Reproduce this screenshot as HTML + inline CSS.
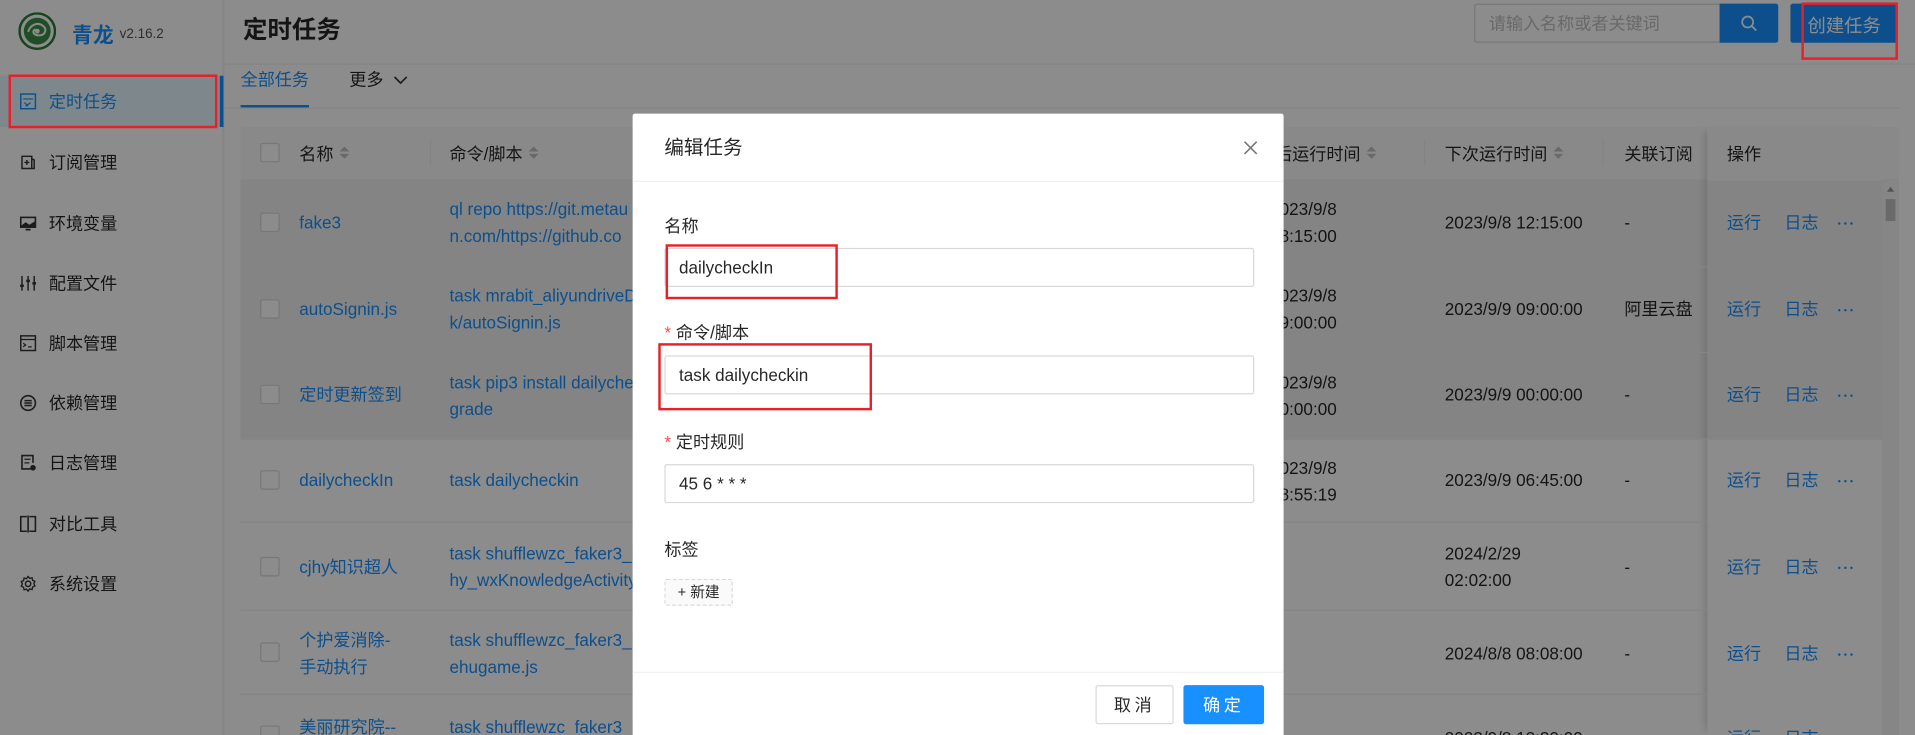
<!DOCTYPE html>
<html><head><meta charset="utf-8">
<style>
*{box-sizing:border-box;margin:0;padding:0}
html,body{width:1915px;height:735px;overflow:hidden;background:#fff}
body{font-family:"Liberation Sans","Noto Sans CJK SC",sans-serif;color:rgba(0,0,0,.85)}
#root{position:absolute;left:0;top:0;width:1568px;height:602px;transform:scale(1.22130);transform-origin:0 0;overflow:hidden;background:#f5f6f8}
.abs{position:absolute}
.side{left:0;top:0;width:183px;height:602px;background:#fff;border-right:1px solid #eee}
.mi{position:absolute;left:0;width:180px;height:40px;line-height:40px;font-size:14px;color:rgba(0,0,0,.85)}
.mi .ic{position:absolute;left:16px;top:13px;width:14px;height:14px}
.mi span.t{position:absolute;left:40px}
.main{left:184px;top:0;width:1384px;height:602px;background:#fff}
.th{position:absolute;top:104px;height:44px;line-height:44px;font-size:14px;color:rgba(0,0,0,.85)}
.sort{display:inline-block;width:8px;height:12px;vertical-align:-1px;margin-left:5px;position:relative}
.sort:before{content:"";position:absolute;left:0;top:0;border:4px solid transparent;border-bottom:4px solid #bfbfbf;border-top:0}
.sort:after{content:"";position:absolute;left:0;top:6px;border:4px solid transparent;border-top:4px solid #bfbfbf;border-bottom:0}
.row{position:absolute;left:197px;width:1201px;border-bottom:1px solid #f0f0f0}
.cb{position:absolute;left:213px;width:16px;height:16px;border:1px solid #d9d9d9;border-radius:2px;background:#fff}
.c{position:absolute;font-size:14px;line-height:22px}
.lk{color:#1890ff}
.dots{position:absolute;left:1505px;width:14px;height:3px}
.dots:before{content:"";position:absolute;left:0;top:0;width:2px;height:2px;background:#1890ff;box-shadow:5px 0 0 #1890ff,10px 0 0 #1890ff;border-radius:1px}
.mask{left:0;top:0;width:1568px;height:602px;background:rgba(0,0,0,.45)}
.modal{left:518px;top:93px;width:533px;height:520px;background:#fff;border-radius:2px}
.lab{position:absolute;left:26px;font-size:14px;color:rgba(0,0,0,.85)}
.lab b{color:#ff4d4f;font-weight:normal;margin-right:4px;font-family:"Liberation Sans",sans-serif}
.inp{position:absolute;left:26px;width:483px;height:32px;border:1px solid #d9d9d9;border-radius:2px;font-size:14px;line-height:30px;padding-left:11px;color:rgba(0,0,0,.85)}
.red{position:absolute;border:2px solid #e8202a}
</style></head><body>
<div id="root">
<div class="abs side">
  <svg class="abs" style="left:15px;top:10px" width="31" height="31" viewBox="0 0 31 31"><circle cx="15.5" cy="15.5" r="14.5" fill="#fff" stroke="#2a7a3a" stroke-width="2"/><circle cx="15.5" cy="15.5" r="11" fill="#3a8f45"/><path d="M8 16c2-6 8-8 12-5s2 8-3 8-6-4-3-5" fill="none" stroke="#fff" stroke-width="1.6"/><circle cx="15.5" cy="15.5" r="2" fill="#fff"/></svg>
  <div class="abs" style="left:59px;top:15px;font-size:17px;font-weight:bold;color:#1890ff">青龙</div>
  <div class="abs" style="left:98px;top:22px;font-size:11px;color:#555">v2.16.2</div>
  <div class="abs" style="left:0;top:62px;width:180px;height:42px;background:#e6f7ff"></div>
  <div class="abs" style="left:180px;top:62px;width:3px;height:42px;background:#1890ff"></div>
  <div class="mi" style="top:63px;color:#1890ff"><svg class="ic" viewBox="0 0 14 14"><rect x="1" y="1" width="12" height="12" fill="none" stroke="#1890ff" stroke-width="1.2"/><path d="M3 5h8M4 8l3 3M9 8l-4 3" stroke="#1890ff" stroke-width="1" fill="none"/></svg><span class="t">定时任务</span></div>
  <div class="mi" style="top:113px"><svg class="ic" viewBox="0 0 14 14"><path d="M2 2h8v10H2zM10 4l2 1v7l-2 0M6 5v4M4 7h4" fill="none" stroke="#333" stroke-width="1.2"/></svg><span class="t">订阅管理</span></div>
  <div class="mi" style="top:163px"><svg class="ic" viewBox="0 0 14 14"><rect x="1" y="2" width="12" height="8" fill="none" stroke="#333" stroke-width="1.3"/><path d="M1 9l4-3 3 2 5-3v5H1z" fill="#333"/><path d="M5 12h4" stroke="#333" stroke-width="1.5"/></svg><span class="t">环境变量</span></div>
  <div class="mi" style="top:212px"><svg class="ic" viewBox="0 0 14 14"><path d="M2 1v12M7 1v12M12 1v12" stroke="#333" stroke-width="1.2"/><rect x="0.5" y="8" width="3" height="2" fill="#333"/><rect x="5.5" y="4" width="3" height="2" fill="#333"/><rect x="10.5" y="6" width="3" height="2" fill="#333"/></svg><span class="t">配置文件</span></div>
  <div class="mi" style="top:261px"><svg class="ic" viewBox="0 0 14 14"><rect x="1" y="1" width="12" height="12" fill="none" stroke="#333" stroke-width="1.2"/><path d="M1 4h12M3 7l2 1.5L3 10M7 10h3" fill="none" stroke="#333" stroke-width="1"/></svg><span class="t">脚本管理</span></div>
  <div class="mi" style="top:310px"><svg class="ic" viewBox="0 0 14 14"><circle cx="7" cy="7" r="6" fill="none" stroke="#333" stroke-width="1.3"/><path d="M4 5h6M4 7h6M4 9h6" stroke="#333" stroke-width="1.2"/></svg><span class="t">依赖管理</span></div>
  <div class="mi" style="top:359px"><svg class="ic" viewBox="0 0 14 14"><path d="M9 12H2V1h9v6" fill="none" stroke="#333" stroke-width="1.3"/><path d="M4 4h5M4 7h4" stroke="#333"/><circle cx="11" cy="11" r="2.3" fill="#333"/></svg><span class="t">日志管理</span></div>
  <div class="mi" style="top:409px"><svg class="ic" viewBox="0 0 14 14"><path d="M6 1H1v12h5M8 1h5v12H8M7 0v14" fill="none" stroke="#333" stroke-width="1.3"/></svg><span class="t">对比工具</span></div>
  <div class="mi" style="top:458px"><svg class="ic" viewBox="0 0 14 14"><circle cx="7" cy="7" r="2.2" fill="none" stroke="#333" stroke-width="1.2"/><path d="M7 1l1.3 1.6 2-.5.4 2 1.9.9-.9 1.9.9 1.9-1.9.9-.4 2-2-.5L7 13l-1.3-1.6-2 .5-.4-2-1.9-.9.9-1.9-.9-1.9 1.9-.9.4-2 2 .5z" fill="none" stroke="#333" stroke-width="1.1"/></svg><span class="t">系统设置</span></div>
</div>
<div class="abs main"></div>
<div class="abs" style="left:199px;top:8px;font-size:20px;font-weight:bold;color:rgba(0,0,0,.85)">定时任务</div>
<div class="abs" style="left:1207px;top:3px;width:202px;height:32px;border:1px solid #d9d9d9;border-radius:2px 0 0 2px;font-size:14px;line-height:30px;padding-left:11px;color:#bfbfbf;background:#fff">请输入名称或者关键词</div>
<div class="abs" style="left:1408px;top:3px;width:48px;height:32px;background:#1890ff;border-radius:0 2px 2px 0"><svg class="abs" style="left:17px;top:9px" width="14" height="14" viewBox="0 0 14 14"><circle cx="6" cy="6" r="4.5" fill="none" stroke="#fff" stroke-width="1.4"/><path d="M9.3 9.3L13 13" stroke="#fff" stroke-width="1.5"/></svg></div>
<div class="abs" style="left:1466px;top:3px;width:88px;height:32px;background:#1890ff;border-radius:2px"><div class="abs" style="left:0;top:10px;width:88px;color:#fff;font-size:15px;line-height:18px;text-align:center">创建任务</div></div>
<div class="abs" style="left:184px;top:52px;width:1384px;height:1px;background:#eee"></div>
<div class="abs" style="left:197px;top:54px;font-size:14px;line-height:22px;color:#1890ff">全部任务</div>
<div class="abs" style="left:197px;top:86px;width:56px;height:2px;background:#1890ff"></div>
<div class="abs" style="left:286px;top:54px;font-size:14px;line-height:22px">更多 <svg width="12" height="8" viewBox="0 0 12 8" style="margin-left:4px"><path d="M1 1l5 5 5-5" fill="none" stroke="#333" stroke-width="1.4"/></svg></div>
<div class="abs" style="left:184px;top:88px;width:1371px;height:1px;background:#eee"></div>
<div class="abs" style="left:197px;top:104px;width:1358px;height:44px;background:#fafafa;border-bottom:1px solid #f0f0f0"></div>
<div class="abs" style="left:197px;top:148px;width:1201px;height:212px;background:#f0f0f0"></div>
<div class="cb" style="top:117px"></div>
<div class="th" style="left:245px">名称<span class="sort"></span></div>
<div class="abs" style="left:352px;top:114px;width:1px;height:22px;background:#eee"></div>
<div class="th" style="left:368px">命令/脚本<span class="sort"></span></div>
<div class="th" style="left:1030px">最后运行时间<span class="sort"></span></div>
<div class="abs" style="left:1166px;top:114px;width:1px;height:22px;background:#eee"></div>
<div class="th" style="left:1183px">下次运行时间<span class="sort"></span></div>
<div class="abs" style="left:1312px;top:114px;width:1px;height:22px;background:#eee"></div>
<div class="th" style="left:1330px">关联订阅</div>
<div class="abs" style="left:1398px;top:104px;width:143px;height:498px;background:#fff;box-shadow:-6px 0 6px -4px rgba(0,0,0,.15)"></div>
<div class="abs" style="left:1398px;top:104px;width:143px;height:44px;background:#fafafa"></div>
<div class="abs" style="left:1398px;top:148px;width:143px;height:212px;background:#f0f0f0"></div>
<div class="th" style="left:1414px">操作</div>
<div class="abs" style="left:1541px;top:148px;width:14px;height:454px;background:#f5f5f5"></div>
<div class="abs" style="left:1544px;top:163px;width:8px;height:18px;background:#c1c1c1"></div>
<div class="abs" style="left:1545px;top:153px;border:3px solid transparent;border-bottom:4px solid #999;border-top:0"></div>

<div class="row" style="top:148px;height:71px"></div>
<div class="row" style="top:219px;height:70px"></div>
<div class="row" style="top:289px;height:71px"></div>
<div class="row" style="top:360px;height:68px"></div>
<div class="row" style="top:428px;height:72px"></div>
<div class="row" style="top:500px;height:69px"></div>

<div class="cb" style="top:174px"></div><div class="c lk" style="left:245px;top:171px">fake3</div>
<div class="c lk" style="left:368px;top:160px">ql repo https://git.metau<br>n.com/https://github.co</div>
<div class="c" style="left:1040px;top:160px">2023/9/8<br>18:15:00</div>
<div class="c" style="left:1183px;top:171px">2023/9/8 12:15:00</div>
<div class="c" style="left:1330px;top:171px">-</div>

<div class="cb" style="top:245px"></div><div class="c lk" style="left:245px;top:242px">autoSignin.js</div>
<div class="c lk" style="left:368px;top:231px">task mrabit_aliyundriveD<br>k/autoSignin.js</div>
<div class="c" style="left:1040px;top:231px">2023/9/8<br>09:00:00</div>
<div class="c" style="left:1183px;top:242px">2023/9/9 09:00:00</div>
<div class="c" style="left:1330px;top:242px">阿里云盘</div>

<div class="cb" style="top:315px"></div><div class="c lk" style="left:245px;top:312px">定时更新签到</div>
<div class="c lk" style="left:368px;top:302px">task pip3 install dailyche<br>grade</div>
<div class="c" style="left:1040px;top:302px">2023/9/8<br>00:00:00</div>
<div class="c" style="left:1183px;top:312px">2023/9/9 00:00:00</div>
<div class="c" style="left:1330px;top:312px">-</div>

<div class="cb" style="top:385px"></div><div class="c lk" style="left:245px;top:382px">dailycheckIn</div>
<div class="c lk" style="left:368px;top:382px">task dailycheckin</div>
<div class="c" style="left:1040px;top:372px">2023/9/8<br>18:55:19</div>
<div class="c" style="left:1183px;top:382px">2023/9/9 06:45:00</div>
<div class="c" style="left:1330px;top:382px">-</div>

<div class="cb" style="top:456px"></div><div class="c lk" style="left:245px;top:453px">cjhy知识超人</div>
<div class="c lk" style="left:368px;top:442px">task shufflewzc_faker3_r<br>hy_wxKnowledgeActivity</div>
<div class="c" style="left:1183px;top:442px">2024/2/29<br>02:02:00</div>
<div class="c" style="left:1330px;top:453px">-</div>

<div class="cb" style="top:526px"></div><div class="c lk" style="left:245px;top:513px">个护爱消除-<br>手动执行</div>
<div class="c lk" style="left:368px;top:513px">task shufflewzc_faker3_r<br>ehugame.js</div>
<div class="c" style="left:1183px;top:524px">2024/8/8 08:08:00</div>
<div class="c" style="left:1330px;top:524px">-</div>

<div class="cb" style="top:594px"></div><div class="c lk" style="left:245px;top:584px">美丽研究院--</div>
<div class="c lk" style="left:368px;top:584px">task shufflewzc_faker3_r</div>
<div class="c" style="left:1183px;top:593px">2023/9/8 12:30:00</div>

<div class="c lk" style="left:1414px;top:171px">运行</div><div class="c lk" style="left:1461px;top:171px">日志</div><div class="dots" style="top:182px"></div>
<div class="c lk" style="left:1414px;top:242px">运行</div><div class="c lk" style="left:1461px;top:242px">日志</div><div class="dots" style="top:253px"></div>
<div class="c lk" style="left:1414px;top:312px">运行</div><div class="c lk" style="left:1461px;top:312px">日志</div><div class="dots" style="top:323px"></div>
<div class="c lk" style="left:1414px;top:382px">运行</div><div class="c lk" style="left:1461px;top:382px">日志</div><div class="dots" style="top:393px"></div>
<div class="c lk" style="left:1414px;top:453px">运行</div><div class="c lk" style="left:1461px;top:453px">日志</div><div class="dots" style="top:464px"></div>
<div class="c lk" style="left:1414px;top:524px">运行</div><div class="c lk" style="left:1461px;top:524px">日志</div><div class="dots" style="top:535px"></div>
<div class="c lk" style="left:1414px;top:593px">运行</div><div class="c lk" style="left:1461px;top:593px">日志</div>

<div class="abs mask"></div>
<div class="red" style="left:7px;top:61px;width:171px;height:44px"></div>
<div class="red" style="left:1475px;top:2px;width:79px;height:47px"></div>

<div class="abs modal">
  <div class="abs" style="left:26px;top:17px;font-size:16px;line-height:24px">编辑任务</div>
  <svg class="abs" style="left:500px;top:22px" width="12" height="12" viewBox="0 0 12 12"><path d="M1 1l10 10M11 1L1 11" stroke="#777" stroke-width="1.3"/></svg>
  <div class="abs" style="left:0;top:55px;width:533px;height:1px;background:#f0f0f0"></div>
  <div class="lab" style="top:82px">名称</div>
  <div class="inp" style="top:110px">dailycheckIn</div>
  <div class="lab" style="top:169px"><b>*</b>命令/脚本</div>
  <div class="inp" style="top:198px">task dailycheckin</div>
  <div class="lab" style="top:259px"><b>*</b>定时规则</div>
  <div class="inp" style="top:287px">45 6 * * *</div>
  <div class="lab" style="top:347px">标签</div>
  <div class="abs" style="left:26px;top:381px;width:56px;height:22px;border:1px dashed #d9d9d9;border-radius:2px;background:#fafafa;font-size:12px;line-height:20px;text-align:center">+ 新建</div>
  <div class="abs" style="left:0;top:457px;width:533px;height:1px;background:#f0f0f0"></div>
  <div class="abs" style="left:379px;top:468px;width:64px;height:32px;border:1px solid #d9d9d9;border-radius:2px;font-size:14px;line-height:30px;text-align:center;letter-spacing:3px">取消</div>
  <div class="abs" style="left:451px;top:468px;width:66px;height:32px;background:#1890ff;border-radius:2px;color:#fff;font-size:14px;line-height:32px;text-align:center;letter-spacing:3px">确定</div>
</div>
<div class="red" style="left:545px;top:200px;width:141px;height:45px"></div>
<div class="red" style="left:539px;top:281px;width:175px;height:55px"></div>
</div>
</body></html>
